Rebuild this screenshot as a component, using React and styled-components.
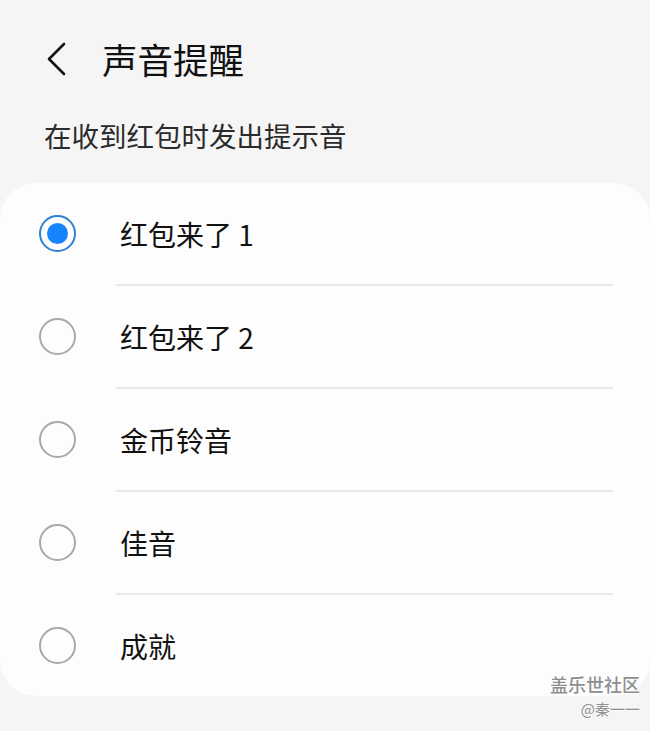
import React, { useState } from 'react';
import styled, { createGlobalStyle } from 'styled-components';

const GlobalStyle = createGlobalStyle`
  html, body {
    margin: 0;
    padding: 0;
    background: #f5f5f5;
  }
  body {
    font-family: "Noto Sans CJK SC", "Noto Sans", sans-serif;
  }
`;

const Page = styled.div`
  position: relative;
  width: 650px;
  height: 731px;
  overflow: hidden;
  background: #f5f5f5;
`;

const Header = styled.div`
  display: flex;
  align-items: center;
  height: 36px;
  padding: 41px 0 0 44px;
`;

const BackButton = styled.button`
  display: flex;
  align-items: center;
  justify-content: center;
  width: 24px;
  height: 36px;
  padding: 0;
  border: none;
  background: none;
  margin-right: 34px;
  cursor: pointer;
`;

const Title = styled.h1`
  margin: 0;
  font-size: 35.5px;
  font-weight: 400;
  line-height: 36px;
  color: #111;
`;

const Subtitle = styled.div`
  margin: 40px 0 0 44px;
  font-size: 27.5px;
  line-height: 36px;
  color: #2b2b2b;
`;

const Card = styled.div`
  margin-top: 30px;
  background: #fdfdfd;
  border-radius: 36px;
`;

const Row = styled.label`
  display: flex;
  align-items: center;
  height: 101px;
  padding-left: 39px;
  cursor: pointer;
`;

const Radio = styled.span`
  box-sizing: border-box;
  display: flex;
  align-items: center;
  justify-content: center;
  width: 37px;
  height: 37px;
  border-radius: 50%;
  border: 2px solid ${(p) => (p.checked ? '#2f80d4' : '#a9a9a9')};
  margin-right: 44px;
  flex-shrink: 0;
`;

const Dot = styled.span`
  width: 21px;
  height: 21px;
  border-radius: 50%;
  background: #1683ff;
`;

const Label = styled.span`
  font-size: 28px;
  line-height: 36px;
  color: #111;
`;

const Divider = styled.div`
  height: 2px;
  margin: 0 37px 0 116px;
  background: #e8e8e8;
`;

const Watermark = styled.div`
  position: absolute;
  right: 10px;
  bottom: 12px;
  display: flex;
  flex-direction: column;
  align-items: flex-end;
  color: #8f8f8f;
  text-shadow: 1px 1px 0 rgba(255, 255, 255, 0.8);
`;

const MarkTitle = styled.div`
  font-size: 18px;
  line-height: 22px;
  font-weight: 500;
`;

const MarkAuthor = styled.div`
  font-size: 15px;
  line-height: 20px;
  margin-top: 4px;
`;

const options = ['红包来了 1', '红包来了 2', '金币铃音', '佳音', '成就'];

export default function App() {
  const [selected, setSelected] = useState(0);

  return (
    <Page>
      <GlobalStyle />
      <Header>
        <BackButton aria-label="返回">
          <svg width="22" height="34" viewBox="0 0 22 34">
            <path d="M19 2 L4 17 L19 32" fill="none" stroke="#111" strokeWidth="2.6" strokeLinecap="round" strokeLinejoin="round" />
          </svg>
        </BackButton>
        <Title>声音提醒</Title>
      </Header>
      <Subtitle>在收到红包时发出提示音</Subtitle>
      <Card>
        {options.map((name, i) => (
          <React.Fragment key={name}>
            {i > 0 && <Divider />}
            <Row onClick={() => setSelected(i)}>
              <Radio checked={selected === i}>{selected === i && <Dot />}</Radio>
              <Label>{name}</Label>
            </Row>
          </React.Fragment>
        ))}
      </Card>
      <Watermark>
        <MarkTitle>盖乐世社区</MarkTitle>
        <MarkAuthor>@秦一一</MarkAuthor>
      </Watermark>
    </Page>
  );
}
